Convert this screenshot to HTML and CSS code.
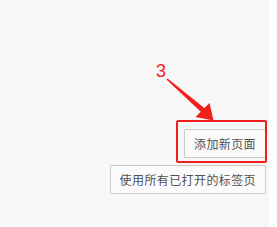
FILE: index.html
```html
<!DOCTYPE html>
<html>
<head>
<meta charset="utf-8">
<link rel="stylesheet" href="styles.css">
</head>
<body>
<div class="page">
  <main class="panel">
    <div class="actions">
      <button class="btn">添加新页面</button>
      <button class="btn">使用所有已打开的标签页</button>
    </div>
  </main>
  <aside class="strip"></aside>
  <div class="callout">
    <span class="num">3</span>
    <svg class="arrow" width="277" height="227" viewBox="0 0 277 227">
      <polygon points="166.4,79.6 167.6,78.4 206.8,110 203.2,114" fill="#f0201c"/>
      <polygon points="213.5,120.5 195.5,117 209.5,103" fill="#f0201c"/>
    </svg>
    <div class="frame"></div>
  </div>
</div>
</body>
</html>
```
FILE: styles.css
```css
html, body {
  margin: 0;
  padding: 0;
}
body {
  width: 277px;
  height: 227px;
  overflow: hidden;
  font-family: "Noto Sans CJK SC", "Liberation Sans", sans-serif;
}
.page {
  display: flex;
  width: 277px;
  height: 227px;
  position: relative;
}
.panel {
  flex: 0 0 269px;
  background: #f7f7f7;
}
.strip {
  flex: 1;
  background: #ffffff;
}
.actions {
  display: flex;
  flex-direction: column;
  align-items: flex-end;
  gap: 7px;
  padding-top: 129px;
  padding-right: 3px;
}
.btn {
  font-family: "Noto Sans CJK SC", "Liberation Sans", sans-serif;
  font-size: 12px;
  letter-spacing: 0.4px;
  color: #505050;
  background: #fbfbfb;
  border: 1px solid #c9c9c9;
  border-radius: 1px;
  height: 29px;
  padding: 0 9px 0 9px;
  line-height: 27px;
  margin: 0;
}
.callout {
  position: absolute;
  left: 0;
  top: 0;
  width: 277px;
  height: 227px;
  pointer-events: none;
}
.num {
  position: absolute;
  left: 156px;
  top: 59px;
  font-family: "Liberation Sans", sans-serif;
  font-size: 18px;
  line-height: 24px;
  color: #f0201c;
}
.arrow {
  position: absolute;
  left: 0;
  top: 0;
}
.frame {
  position: absolute;
  left: 176px;
  top: 120px;
  width: 87px;
  height: 39px;
  border: 2.5px solid #ee1f1c;
  border-radius: 2px;
}
```
